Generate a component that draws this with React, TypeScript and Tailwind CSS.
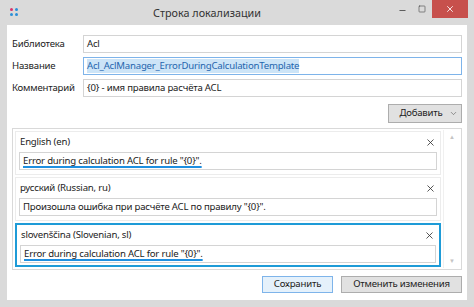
import { X, ChevronDown, Minus, Square } from "lucide-react";

const font = { fontFamily: '"Noto Sans", "Open Sans", sans-serif' };

function Field({ label, children, active }: { label: string; children: React.ReactNode; active?: boolean }) {
  return (
    <div className="flex items-center">
      <span className="w-[71px] shrink-0 text-[9.6px] tracking-[-0.2px] text-[#222]">{label}</span>
      <div
        className={`flex-1 h-[18px] flex items-center px-[3px] border text-[9.6px] tracking-[-0.2px] ${
          active ? "border-[#7eb4ea]" : "border-[#d4d4d4]"
        }`}
      >
        {children}
      </div>
    </div>
  );
}

function Item({ lang, text, selected, spell }: { lang: string; text: string; selected?: boolean; spell?: boolean }) {
  return (
    <div
      className={`h-[44px] px-[3px] pt-[3px] flex flex-col ${
        selected ? "border-2 border-[#1e9bd7]" : "border border-[#ececec]"
      }`}
    >
      <div className="flex items-center justify-between h-[14px] pl-px pr-[1px]">
        <span className="text-[9.6px] tracking-[-0.2px] text-[#222]">{lang}</span>
        <X size={11} strokeWidth={1.8} className="text-[#333]" />
      </div>
      <div className="mt-[3px] h-[18px] border border-[#d4d4d4] flex items-center px-[3px] text-[9.6px] tracking-[-0.2px] text-[#222]">
        <span
          className={
            spell
              ? "underline decoration-[#1e8fe0] decoration-[1.5px] underline-offset-[2px] [text-decoration-skip-ink:none]"
              : ""
          }
        >
          {text}
        </span>
      </div>
    </div>
  );
}

export default function App() {
  return (
    <div className="w-[474px] h-[307px] bg-[#dadada] flex flex-col overflow-hidden" style={font}>
      <div className="h-[25px] flex items-start relative">
        <div className="grid grid-cols-2 gap-[2px] ml-[10px] mt-[8px]">
          <span className="w-[3px] h-[3px] rounded-full bg-[#d9336b]" />
          <span className="w-[3px] h-[3px] rounded-full bg-[#2a8fd8]" />
          <span className="w-[3px] h-[3px] rounded-full bg-[#2a8fd8]" />
          <span className="w-[3px] h-[3px] rounded-full bg-[#2a8fd8]" />
        </div>
        <div className="flex-1 text-center text-[10.8px] text-[#333] mt-[5px] pl-[4px]">Строка локализации</div>
        <div className="flex items-start">
          <div className="w-[20px] h-[18px] flex items-center justify-center mt-[1px]">
            <Minus size={9} strokeWidth={2} className="text-[#333]" />
          </div>
          <div className="w-[20px] h-[18px] flex items-center justify-center">
            <Square size={8} strokeWidth={1.6} className="text-[#333]" />
          </div>
          <div className="w-[36px] h-[18px] bg-[#c7504c] flex items-center justify-center mr-[6px]">
            <X size={10} strokeWidth={2} className="text-white" />
          </div>
        </div>
      </div>
      <div className="mx-[7px] flex-1 mb-[7px] bg-white flex flex-col pl-[5px] pr-[5px] pt-[10px]">
        <div className="flex flex-col gap-[4px]">
          <Field label="Библиотека">
            <span className="text-[#222]">Acl</span>
          </Field>
          <Field label="Название" active>
            <span className="bg-[#cce4f7] text-[#1f64ae]">Acl_AclManager_ErrorDuringCalculationTemplate</span>
          </Field>
          <Field label="Комментарий">
            <span className="text-[#222]">{"{0} - имя правила расчёта ACL"}</span>
          </Field>
        </div>
        <div className="flex justify-end mt-[7px]">
          <div className="w-[74px] h-[19px] bg-[#e1e1e1] border border-[#adadad] flex items-center text-[9.6px] tracking-[-0.2px] text-[#222]">
            <span className="flex-1 text-center pl-[4px]">Добавить</span>
            <ChevronDown size={9} strokeWidth={1.6} className="mr-[3px] text-[#555]" />
          </div>
        </div>
        <div className="mt-[5px] h-[142px] border border-[#d9d9d9] flex p-[1px]">
          <div className="flex-1 flex flex-col gap-[2px] pt-[1px] pl-px">
            <Item lang="English (en)" text={'Error during calculation ACL for rule "{0}".'} spell />
            <Item lang="русский (Russian, ru)" text={'Произошла ошибка при расчёте ACL по правилу "{0}".'} />
            <Item lang="slovenščina (Slovenian, sl)" text={'Error during calculation ACL for rule "{0}".'} selected spell />
          </div>
          <div className="w-[17px] ml-[2px] flex flex-col items-center justify-between py-[4px] border-l border-[#f0f0f0]">
            <span className="text-[6px] leading-none text-[#c4c4c4]">▲</span>
            <span className="text-[6px] leading-none text-[#c4c4c4]">▼</span>
          </div>
        </div>
        <div className="flex justify-end gap-[8px] mt-[6px]">
          <div className="w-[71px] h-[17px] bg-[#e5f1fb] border border-[#7eb4ea] flex items-center justify-center text-[9.6px] tracking-[-0.2px] text-[#222]">
            Сохранить
          </div>
          <div className="w-[121px] h-[17px] bg-[#e1e1e1] border border-[#adadad] flex items-center justify-center text-[9.6px] tracking-[-0.2px] text-[#222]">
            Отменить изменения
          </div>
        </div>
      </div>
    </div>
  );
}
